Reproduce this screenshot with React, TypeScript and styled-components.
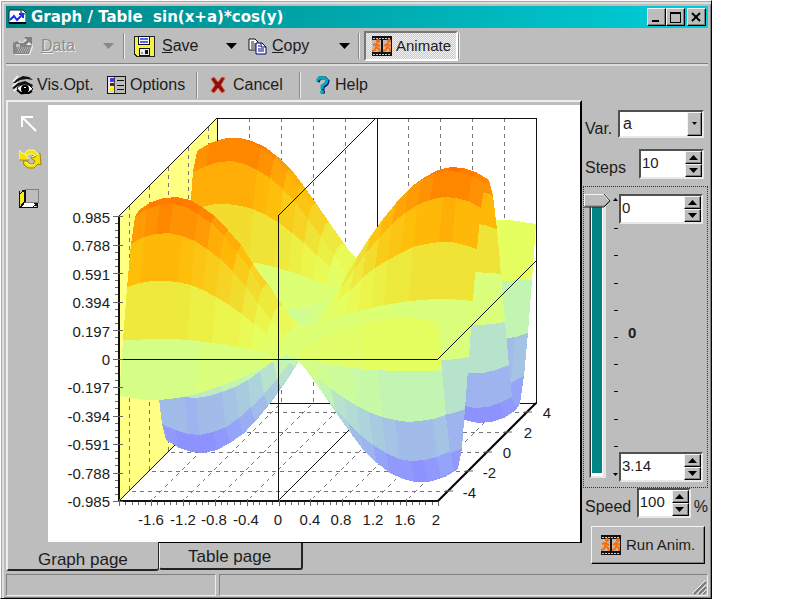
import React, { useState } from 'react';
import styled, { createGlobalStyle, css } from 'styled-components';

const FACE = '#bdbdbd';
const raised = css`
  border: 1px solid;
  border-color: #f4f4f4 #000 #000 #f4f4f4;
  box-shadow: inset -1px -1px 0 #808080;
`;
const sunken = css`
  border: 2px solid;
  border-color: #505050 #e8e8e8 #e8e8e8 #505050;
`;

const GlobalStyle = createGlobalStyle`
  * { box-sizing: border-box; }
  body {
    margin: 0;
    background: #fff;
    color: #1c1c1c;
    font: 16px/20px "Liberation Sans", Arial, sans-serif;
  }
  button, input, select { font: inherit; color: inherit; margin: 0; padding: 0; border-radius: 0; }
  svg { display: block; flex: none; }
`;

const Page = styled.div`
  min-height: 100vh;
  padding: 0 88px 1px 0;
  display: flex;
`;
const Window = styled.main`
  flex: 1;
  min-width: 0;
  display: flex;
  flex-direction: column;
  background: ${FACE};
  border: 1px solid;
  border-color: #fff #000 #000 #fff;
  box-shadow: inset 1px 1px 0 #a8a8a8, inset 3px 3px 0 #dedede, inset -1px -1px 0 #808080;
  padding: 5px 3px 2px 5px;
`;

const TitleBar = styled.header`
  height: 22px;
  display: flex;
  align-items: center;
  background: linear-gradient(90deg, #008484, #00ced8);
  color: #fff;
  padding: 0 2px 0 2px;
  gap: 5px;
`;
const Title = styled.h1`
  flex: 1;
  margin: 0;
  font: 700 15px/20px "DejaVu Sans", sans-serif;
  white-space: pre;
`;
const WindowButtons = styled.div`
  display: flex;
`;
const WindowButton = styled.button<{ $apart?: boolean }>`
  width: 19px;
  height: 18px;
  display: grid;
  place-items: center;
  background: ${FACE};
  margin-left: ${p => (p.$apart ? '2px' : '0')};
  ${raised}
`;

const Toolbar = styled.div<{ $second?: boolean }>`
  height: ${p => (p.$second ? '34px' : '38px')};
  display: flex;
  align-items: center;
  border-bottom: ${p => (p.$second ? '0' : '2px solid #dcdcdc')};
  box-shadow: ${p => (p.$second ? 'none' : 'inset 0 -1px 0 #808080')};
  padding: ${p => (p.$second ? '4px 0 0 6px' : '0 0 0 7px')};
`;
const ToolButton = styled.button<{ $w: number; $gap?: number; $disabled?: boolean; $down?: boolean }>`
  width: ${p => p.$w}px;
  height: 30px;
  display: flex;
  align-items: center;
  gap: ${p => p.$gap ?? 6}px;
  border: 0;
  background: none;
  text-align: left;
  white-space: nowrap;
  ${p => p.$disabled && css`
    color: #8c8c8c;
    text-shadow: 1px 1px 0 #eee;
  `}
  ${p => p.$down && css`
    padding-left: 6px;
    gap: 4px;
    font-size: 15px;
    border: 2px solid;
    border-color: #777 #fff #fff #777;
    background: repeating-conic-gradient(#f2f2f2 0 25%, #cacaca 0 50%) 0 0 / 2px 2px;
  `}
`;
const DropButton = styled.button<{ $w: number }>`
  width: ${p => p.$w}px;
  height: 30px;
  border: 0;
  background: none;
  display: grid;
  align-items: center;
`;
const Separator = styled.span<{ $gap: number }>`
  width: 2px;
  height: 26px;
  background: linear-gradient(90deg, #888 50%, #eee 50%);
  margin-right: ${p => p.$gap}px;
`;

const Body = styled.div`
  flex: 1;
  display: flex;
`;
const Book = styled.section`
  flex: 1;
  min-width: 0;
  display: flex;
  flex-direction: column;
`;
const BookPage = styled.div`
  flex: 1;
  display: flex;
  border: 2px solid;
  border-color: #eee #000 #000 #eee;
  border-bottom-width: 1px;
  padding-top: 3px;
`;
const IconStrip = styled.nav`
  width: 40px;
  display: flex;
  flex-direction: column;
  align-items: flex-start;
  padding: 9px 0 0 11px;
`;
const StripButton = styled.button<{ $h: number }>`
  height: ${p => p.$h}px;
  width: 26px;
  border: 0;
  background: none;
  display: flex;
  align-items: flex-start;
`;
const ChartArea = styled.div`
  flex: 1;
  min-width: 0;
  background: #fff;
`;
const ChartSvg = styled.svg`
  width: 100%;
  height: auto;
  font-size: 15px;
  fill: #1c1c1c;
`;
const Tabs = styled.div`
  display: flex;
  height: 31px;
  align-items: flex-start;
`;
const Tab = styled.button<{ $active?: boolean }>`
  width: ${p => (p.$active ? '153px' : '144px')};
  height: ${p => (p.$active ? '29px' : '27px')};
  margin-top: ${p => (p.$active ? '-1px' : '0')};
  padding: ${p => (p.$active ? '8px 0 0 30px' : '3px 0 0 28px')};
  text-align: left;
  font-size: 17px;
  background: ${FACE};
  border: 0 solid;
  border-color: #eee #222 #222 #eee;
  border-width: ${p => (p.$active ? '0 1px 2px 2px' : '0 2px 2px 1px')};
  border-radius: 0 0 3px 3px;
`;

const Side = styled.aside`
  width: 126px;
  display: flex;
  flex-direction: column;
  padding-left: 1px;
`;
const Field = styled.div<{ $top: number; $right?: number }>`
  display: flex;
  align-items: flex-start;
  justify-content: space-between;
  margin-top: ${p => p.$top}px;
  padding: 0 ${p => p.$right ?? 4}px 0 2px;
`;
const Label = styled.label`
  padding-top: 9px;
`;
const ComboWrap = styled.div`
  width: 86px;
  height: 28px;
  background: #fff;
  display: flex;
  ${sunken}
`;
const Combo = styled.select`
  appearance: none;
  flex: 1;
  border: 0;
  background: #fff;
  padding-left: 3px;
`;
const ComboArrow = styled.span`
  width: 15px;
  background: ${FACE};
  display: grid;
  place-items: center;
  pointer-events: none;
  ${raised}
`;
const SpinBox = styled.div<{ $w: number }>`
  width: ${p => p.$w}px;
  height: 30px;
  display: flex;
  background: #fff;
  ${sunken}
`;
const SpinInput = styled.input`
  flex: 1;
  min-width: 0;
  height: 22px;
  border: 0;
  background: none;
  font-size: 15px;
  padding-left: 1px;
`;
const SpinButtons = styled.div`
  width: 17px;
  display: grid;
  grid-template-rows: 1fr 1fr;
`;
const SpinButton = styled.button`
  display: grid;
  place-items: center;
  background: ${FACE};
  ${raised}
`;
const RangeGroup = styled.section`
  height: 302px;
  margin-top: 7px;
  padding: 7px 3px 5px 0;
  display: flex;
  border: 1px dotted #333;
`;
const THUMB = encodeURIComponent(
  `<svg xmlns="http://www.w3.org/2000/svg" width="27" height="14"><path d="M0 0h20l6 7-6 6H0z" fill="${FACE}"/><path d="M0 13V0h20l5 6" fill="none" stroke="#f4f4f4" stroke-width="2"/><path d="M1 12h19l5-5" fill="none" stroke="#808080"/><path d="M0 13h20l6-6-6-7" fill="none" stroke="#222"/></svg>`,
);
const VerticalSlider = styled.input`
  writing-mode: vertical-lr;
  appearance: none;
  width: 27px;
  height: 284px;
  background:
    linear-gradient(#008484, #008484) 8px 8px / 10px calc(100% - 13px) no-repeat,
    linear-gradient(#fff, #fff) 7px 8px / 12px calc(100% - 10px) no-repeat,
    linear-gradient(#333, #333) 6px 8px / 1px calc(100% - 9px) no-repeat,
    linear-gradient(#808080, #808080) 5px 8px / 1px calc(100% - 8px) no-repeat,
    linear-gradient(#e6e6e6, #e6e6e6) 6px 8px / 16px calc(100% - 8px) no-repeat;
  &::-webkit-slider-thumb {
    appearance: none;
    width: 27px;
    height: 14px;
    border: 0;
    background: url("data:image/svg+xml,${THUMB}") 0 0 no-repeat;
  }
`;
const Ticks = styled.div`
  width: 8px;
  display: flex;
  flex-direction: column;
  justify-content: space-between;
  align-items: center;
  padding: 4px 0 5px 1px;
`;
const Tick = styled.i`
  width: 4px;
  height: 1px;
  background: #111;
`;
const RangeValues = styled.div`
  flex: 1;
  display: flex;
  flex-direction: column;
  justify-content: space-between;
`;
const Current = styled.output`
  font-size: 15px;
  font-weight: 700;
  padding: 0 0 10px 9px;
`;
const SpeedControls = styled.div`
  display: flex;
  align-items: flex-start;
  gap: 3px;
`;
const Unit = styled.span`
  padding-top: 9px;
`;
const RunButton = styled.button`
  height: 38px;
  margin: 8px 3px 0 8px;
  display: flex;
  align-items: center;
  gap: 5px;
  padding-left: 9px;
  font-size: 15px;
  white-space: nowrap;
  background: ${FACE};
  ${raised}
`;
const StatusBar = styled.footer`
  display: flex;
  gap: 3px;
  height: 22px;
`;
const StatusPanel = styled.div<{ $w?: number }>`
  flex: ${p => (p.$w ? `0 0 ${p.$w}px` : '1')};
  border: 1px solid;
  border-color: #808080 #eee #eee #808080;
  display: flex;
  justify-content: flex-end;
  align-items: flex-end;
`;

const Arrow = ({ up, w = 7, fill = '#000' }: { up?: boolean; w?: number; fill?: string }) => {
  const h = Math.ceil(w / 2);
  return (
    <svg width={w + 1} height={h + 1}>
      <path d={up ? `M0 ${h}h${w}L${w / 2} 0z` : `M0 0h${w}L${w / 2} ${h}z`} fill={fill} />
    </svg>
  );
};

const AppIcon = () => (
  <svg width="18" height="16" viewBox="0 0 18 16">
    <path d="M2 1h13l3 3v10H1V3z" fill="#fff" stroke="#223" />
    <path d="M13 1v4h4" fill="#ccc" stroke="#223" />
    <path d="M2 11l4-4 3 4 6-6M11 5h4v4" fill="none" stroke="#1830f0" strokeWidth="2" />
    <path d="M1 14h17" stroke="#001" strokeWidth="2" />
  </svg>
);
const DataIcon = () => (
  <svg width="21" height="20" viewBox="0 0 21 20">
    <path d="M2 19V7l4-2 3 2 3-3 1-2 6-1v6l1 4-3 8z" fill="#eee" />
    <path d="M0 17V7l4-2 3 2h4v2h8l-3 9H1z" fill="#858585" />
    <path d="M3 8h4v3H3z" fill="#bdbdbd" />
    <path d="M4 12h13M5 14h11M4 16h11" stroke="#d0d0d0" strokeDasharray="1 1" />
    <path d="M9 8l5-4-3-3h8v8l-3-3-4 4z" fill="#808080" />
  </svg>
);
const SaveIcon = () => (
  <svg width="21" height="21" viewBox="0 0 21 21" shapeRendering="crispEdges">
    <path d="M0 0h21v21H2l-2-2z" fill="#222" />
    <path d="M1 1h19v19H3l-2-2z" fill="#f6f04a" />
    <path d="M4 0h12v9H4z" fill="#111" />
    <path d="M5 1h10v7H5z" fill="#fff" />
    <path d="M6 2h8v2H6zM6 5h8v2H6z" fill="#5468f4" />
    <path d="M5 12h11v8H5z" fill="#111" />
    <path d="M6 13h9v6H6z" fill="#eee" />
    <path d="M11 14h3v4h-3z" fill="#111" />
    <path d="M7 16h2v2H7z" fill="#999" />
  </svg>
);
const CopyIcon = () => (
  <svg width="19" height="17" viewBox="0 0 19 17">
    <path d="M1 1h6l3 3v8H1z" fill="#fff" stroke="#111" />
    <path d="M3 4h3M3 6h5M3 8h5M3 10h5" stroke="#222" />
    <path d="M8 5h6l4 4v7H8z" fill="#fff" stroke="#000084" />
    <path d="M13 5v4h5M10 8h2M10 11h6M10 13h6" fill="none" stroke="#000084" />
  </svg>
);
const FilmIcon = () => (
  <svg width="20" height="20" viewBox="0 0 20 20">
    <path d="M0 0h20v20H0z" fill="#111" shapeRendering="crispEdges" />
    <path d="M1 2h18M1 18h18" stroke="#ccc" strokeWidth="1" strokeDasharray="2 1" shapeRendering="crispEdges" />
    <path d="M0 4h9v12H0zM11 4h8v12h-8z" fill="#bdbdbd" shapeRendering="crispEdges" />
    <g fill="none" stroke="#ff6b00" strokeWidth="2">
      <path d="M5 7l-1 4M1 9l3-1 4 2M4 11l3 2 1 3M4 11l-1 3-3 1" />
      <path d="M16 7l-1 4M12 10l3-2 4 2M15 11l3 2v3M15 11l-1 3-3 1" />
    </g>
    <circle cx="6" cy="5" r="2" fill="#ff6b00" />
    <circle cx="17" cy="5" r="2" fill="#ff6b00" />
  </svg>
);
const EyeIcon = () => (
  <svg width="22" height="20" viewBox="0 0 22 20">
    <path d="M1 7L6 1M0 12l6-5M2 16l5-5" fill="none" stroke="#eee" strokeWidth="2" />
    <path d="M1 8l4-4 6-3 6 1 4 3-6-1-7 1-5 3z" fill="#111" />
    <path d="M0 13l6-5 7-2 8 4-1 2-7-3-7 2-4 3z" fill="#111" />
    <path d="M5 13l4-3h8l4 4-5 4-7 1z" fill="#fff" stroke="#111" />
    <circle cx="13" cy="14" r="4" fill="#000" />
    <path d="M5 15l4 3h8l3-2" fill="none" stroke="#000" strokeWidth="2" />
    <path d="M12 12h2v1h-2z" fill="#fff" />
  </svg>
);
const OptionsIcon = () => (
  <svg width="19" height="18" viewBox="0 0 19 18" shapeRendering="crispEdges">
    <path d="M0 0h19v18H0z" fill="#111" />
    <path d="M1 1h17v16H1z" fill="#e8e8e8" />
    <path d="M8 1h10v16H8z" fill="#bdbdbd" />
    <path d="M7 1h1v16H7z" fill="#444" />
    <path d="M3 2h4v4H3z" fill="#3840ff" />
    <path d="M3 7h4v3H3z" fill="#8b1010" />
    <path d="M3 12h4v4H3z" fill="#ffee00" />
    <path d="M10 4h7v1h-7zM10 9h7v1h-7zM10 13h7v1h-7z" fill="#111" />
  </svg>
);
const CancelIcon = () => (
  <svg width="17" height="18" viewBox="0 0 17 18">
    <path
      d="M1 3l3-2 4 5 4-5 3 1-4 7 4 6-3 2-4-5-4 5-3-2 4-6z"
      fill="#8c1010"
      stroke="#e0603a"
      strokeWidth="1"
    />
  </svg>
);
const HelpIcon = () => (
  <svg width="15" height="20" viewBox="0 0 15 20">
    <path d="M3 7l2-4h5l3 3-1 3-4 3v3" fill="none" stroke="#000084" strokeWidth="3" />
    <path d="M2 6l2-3h5l3 2-1 3-4 3v3" fill="none" stroke="#00adb5" strokeWidth="3" />
    <circle cx="8" cy="17" r="2" fill="#000084" />
    <circle cx="7" cy="17" r="2" fill="#00adb5" />
  </svg>
);
const PointerIcon = () => (
  <svg width="19" height="19" viewBox="0 0 19 19">
    <path d="M3 13V3h11M4 4l13 13" fill="none" stroke="#fff" strokeWidth="2" />
  </svg>
);
const RotateIcon = () => (
  <svg width="23" height="21" viewBox="0 0 23 21">
    <path d="M5 6l4-4h6l4 4-2 3-3-3h-4l-2 2z" fill="#f4e300" stroke="#fff6a0" />
    <path d="M0 2l3 3 3 1 4 5-10 1z" fill="#f4e300" stroke="#fff6a0" />
    <path d="M0 12h10M18 7l-3 2-2-2" fill="none" stroke="#9c8a00" />
    <path d="M4 13h4l3 3h3l2-3-4-3 4-1 5-4 1 12-3-1-4 4H9l-4-3z" fill="#f4e300" stroke="#9c8a00" />
    <path d="M13 9l7-3M6 14l4 3h4" fill="none" stroke="#fff6a0" />
  </svg>
);
const BoxIcon = () => (
  <svg width="22" height="21" viewBox="0 0 22 21" shapeRendering="crispEdges">
    <path d="M1 5l5-4v12l-5 6z" fill="#f6ef20" />
    <path d="M1 19l5-6h14l-5 6z" fill="#fff" />
    <path d="M6 0h14v14H6z" fill="#808080" />
    <path d="M7 1h12v12H7z" fill="#bdbdbd" />
    <path d="M0 2h1v16h18v1H0z" fill="#111" />
    <path d="M5 1h1v12L2 18H1l4-5zM1 5l4-4M14 18l5-4" fill="#111" stroke="#111" />
    <path d="M2 1h4v4zM14 14h5v4z" fill="#111" />
  </svg>
);
const GripIcon = () => (
  <svg width="15" height="15" viewBox="0 0 15 15">
    <path d="M2 14L14 2M7 14l7-7M11 14l3-3" stroke="#777" strokeWidth="2" />
    <path d="M0 14L14 0M5 14l9-9M10 14l4-4" stroke="#eee" />
  </svg>
);

/* Chart geometry: a front rectangle pushed back along a diagonal. */
const LEFT = 71;
const RIGHT = 390;
const TOP = 111;
const BOTTOM = 396;
const ZERO = 254;
const MID = 230;
const DEPTH = 98;
const STEPS = 25;

const project = (x: number, y: number, z: number) => {
  const d = (y + 5) * (DEPTH / 10);
  const px = Math.round(LEFT + (x + 2) * ((RIGHT - LEFT) / 4) + d);
  const py = Math.round(ZERO - z * 144 - d);
  return `${px},${py}`;
};

const PALETTE: [number, number[]][] = [
  [-1, [138, 138, 255]],
  [-0.88, [143, 148, 255]],
  [-0.78, [149, 168, 246]],
  [-0.62, [164, 192, 230]],
  [-0.48, [174, 214, 218]],
  [-0.36, [188, 232, 196]],
  [-0.28, [196, 248, 172]],
  [-0.08, [214, 255, 130]],
  [0.1, [230, 255, 96]],
  [0.22, [236, 243, 72]],
  [0.34, [238, 230, 56]],
  [0.48, [248, 206, 30]],
  [0.62, [255, 188, 8]],
  [0.76, [255, 163, 8]],
  [0.88, [255, 140, 0]],
  [1, [255, 112, 0]],
];
const colorFor = (value: number) => {
  const v = Math.round(value * 20) / 20;
  let i = 0;
  while (i < PALETTE.length - 2 && PALETTE[i + 1][0] < v) i += 1;
  const [a, ca] = PALETTE[i];
  const [b, cb] = PALETTE[i + 1];
  const t = Math.max(0, Math.min(1, (v - a) / (b - a)));
  return `rgb(${ca.map((c, k) => Math.round(c + (cb[k] - c) * t)).join(',')})`;
};

const buildSurface = (a: number) => {
  const f = (x: number, y: number) => Math.sin(x + a) * Math.cos(y);
  const quads: { points: string; fill: string }[] = [];
  for (let j = STEPS - 1; j >= 0; j -= 1) {
    for (let i = 0; i < STEPS; i += 1) {
      const x0 = -2 + (i * 4) / STEPS;
      const x1 = x0 + 4 / STEPS;
      const y0 = -5 + (j * 10) / STEPS;
      const y1 = y0 + 10 / STEPS;
      const corners: [number, number][] = [[x0, y0], [x1, y0], [x1, y1], [x0, y1]];
      const zs = corners.map(([x, y]) => f(x, y));
      quads.push({
        points: corners.map(([x, y], k) => project(x, y, zs[k])).join(' '),
        fill: colorFor((zs[0] + zs[1] + zs[2] + zs[3]) / 4),
      });
    }
  }
  return quads;
};

const Z_LABELS = ['0.985', '0.788', '0.591', '0.394', '0.197', '0', '-0.197', '-0.394', '-0.591', '-0.788', '-0.985'];
const X_LABELS = ['-1.6', '-1.2', '-0.8', '-0.4', '0', '0.4', '0.8', '1.2', '1.6', '2'];
const Y_LABELS = ['-4', '-2', '0', '2', '4'];
const Y_LABEL_ENDS = [428, 448, 463, 484, 503];
const range = (n: number) => Array.from({ length: n }, (_, i) => i);

const Chart = ({ a }: { a: number }) => (
  <ChartSvg viewBox="0 0 532 437" role="img" aria-label="Surface graph of sin(x+a)*cos(y)">
    <g shapeRendering="crispEdges" fill="none" stroke="#111">
      <path d={`M${LEFT} ${TOP}l${DEPTH} -${DEPTH}V${BOTTOM - DEPTH}L${LEFT} ${BOTTOM}z`} fill="#ffff84" stroke="none" />
      <g stroke="#777" strokeDasharray="4 4">
        {range(5).map(i => {
          const d = 10 + i * 20 - (i > 1 ? 1 : 0);
          return <path key={i} d={`M${LEFT + d} ${TOP - d}V${BOTTOM - d}H${RIGHT + d}`} />;
        })}
        {range(9).map(i => {
          const x = LEFT + Math.round(((i + 1) * 319) / 10);
          return i === 4 ? null : <path key={i} d={`M${x + DEPTH} ${TOP - DEPTH}V${BOTTOM - DEPTH}L${x} ${BOTTOM}`} />;
        })}
      </g>
      <path d={`M${LEFT + DEPTH} ${BOTTOM - DEPTH}V${TOP - DEPTH}H${RIGHT + DEPTH}V${BOTTOM - DEPTH}H${LEFT + DEPTH}`} />
      <path d={`M${MID + DEPTH + 1} ${TOP - DEPTH}V${BOTTOM - DEPTH}`} />
    </g>
    <g fill="none" stroke="#111">
      <path d={`M${LEFT} ${TOP}l${DEPTH} -${DEPTH}M${LEFT} ${BOTTOM}l${DEPTH} -${DEPTH}M${MID} ${BOTTOM}l${DEPTH} -${DEPTH}`} />
    </g>
    <g shapeRendering="crispEdges">
      {buildSurface(a).map((q, i) => <polygon key={i} points={q.points} fill={q.fill} />)}
    </g>
    <path d={`M${MID} ${TOP}l${DEPTH} -${DEPTH}M${RIGHT} ${ZERO}l${DEPTH} -${DEPTH}`} stroke="#111" />
    <g shapeRendering="crispEdges" fill="none" stroke="#111">
      <path d={`M${MID} ${TOP}V${BOTTOM}M${LEFT} ${ZERO}H${RIGHT}M${RIGHT + DEPTH} ${TOP - DEPTH}V${BOTTOM - DEPTH}`} />
      <path d={`M${LEFT} ${TOP}V${BOTTOM}H${RIGHT}`} strokeWidth="2" />
      {range(41).map(i => {
        const y = TOP + Math.round((i * 285) / 40);
        return <path key={i} d={i % 4 ? `M${LEFT - 4} ${y}h3` : `M${LEFT - 6} ${y}h10`} stroke="#666" />;
      })}
      {range(51).map(i => {
        const x = LEFT + Math.round((i * 319) / 50);
        return <path key={i} d={i % 5 ? `M${x} ${BOTTOM + 1}v3` : `M${x} ${BOTTOM - 2}v7`} stroke="#666" />;
      })}
    </g>
    <path d={`M${RIGHT} ${BOTTOM}l${DEPTH} -${DEPTH}`} stroke="#000" strokeWidth="2" />
    {range(5).map(i => {
      const d = 10 + i * 20 - (i > 1 ? 1 : 0);
      return <path key={i} d={`M${RIGHT + d - 3} ${BOTTOM - d}h8`} stroke="#666" />;
    })}
    {Z_LABELS.map((t, i) => (
      <text key={t} x={LEFT - 9} y={TOP + 7 + Math.round(i * 28.4)} textAnchor="end">{t}</text>
    ))}
    {X_LABELS.map((t, i) => (
      <text key={t} x={LEFT + 32 + Math.round(i * 31.7)} y={BOTTOM + 24} textAnchor="middle">{t}</text>
    ))}
    {Y_LABELS.map((t, i) => (
      <text key={t} x={Y_LABEL_ENDS[i]} y={BOTTOM - 3 - i * 20} textAnchor="end">{t}</text>
    ))}
  </ChartSvg>
);

const Spin = ({ w, value, label, id }: { w: number; value: string; label?: string; id?: string }) => (
  <SpinBox $w={w}>
    <SpinInput id={id} aria-label={label} defaultValue={value} />
    <SpinButtons>
      <SpinButton aria-label="Increase"><Arrow up w={9} /></SpinButton>
      <SpinButton aria-label="Decrease"><Arrow w={9} /></SpinButton>
    </SpinButtons>
  </SpinBox>
);

export default function App() {
  const [a, setA] = useState(0);
  return (
    <>
      <GlobalStyle />
      <Page>
        <Window>
          <TitleBar>
            <AppIcon />
            <Title>{'Graph / Table  sin(x+a)*cos(y)'}</Title>
            <WindowButtons>
              <WindowButton aria-label="Minimize">
                <svg width="11" height="11"><path d="M1 8h7v2H1z" /></svg>
              </WindowButton>
              <WindowButton aria-label="Maximize">
                <svg width="11" height="11" shapeRendering="crispEdges"><path d="M0 0h11v11H0zM1 2v8h9V2z" fillRule="evenodd" /></svg>
              </WindowButton>
              <WindowButton aria-label="Close" $apart>
                <svg width="11" height="11"><path d="M1 1l8 8M9 1L1 9" stroke="#000" strokeWidth="2" /></svg>
              </WindowButton>
            </WindowButtons>
          </TitleBar>

          <Toolbar>
            <ToolButton $w={90} $gap={7} $disabled disabled><DataIcon /><span><u>D</u>ata</span></ToolButton>
            <DropButton $w={20} aria-label="Data menu" disabled><Arrow w={11} fill="#888" /></DropButton>
            <Separator $gap={9} />
            <ToolButton $w={92} $gap={7}><SaveIcon /><span><u>S</u>ave</span></ToolButton>
            <DropButton $w={22} aria-label="Save menu"><Arrow w={11} /></DropButton>
            <ToolButton $w={91} $gap={5}><CopyIcon /><span><u>C</u>opy</span></ToolButton>
            <DropButton $w={19} aria-label="Copy menu"><Arrow w={11} /></DropButton>
            <Separator $gap={4} />
            <ToolButton $w={94} $down aria-pressed="true"><FilmIcon /><span>Animate</span></ToolButton>
            <Separator $gap={0} />
          </Toolbar>
          <Toolbar $second>
            <ToolButton $w={95} $gap={3}><EyeIcon /><span>Vis.Opt.</span></ToolButton>
            <ToolButton $w={89} $gap={4}><OptionsIcon /><span>Options</span></ToolButton>
            <Separator $gap={12} />
            <ToolButton $w={89} $gap={6}><CancelIcon /><span>Cancel</span></ToolButton>
            <Separator $gap={14} />
            <ToolButton $w={70} $gap={5}><HelpIcon /><span>Help</span></ToolButton>
          </Toolbar>

          <Body>
            <Book>
              <BookPage>
                <IconStrip>
                  <StripButton $h={34} aria-label="Pointer"><PointerIcon /></StripButton>
                  <StripButton $h={41} aria-label="Rotate"><RotateIcon /></StripButton>
                  <StripButton $h={30} aria-label="Axes box"><BoxIcon /></StripButton>
                </IconStrip>
                <ChartArea><Chart a={a} /></ChartArea>
              </BookPage>
              <Tabs role="tablist">
                <Tab role="tab" aria-selected="true" $active>Graph page</Tab>
                <Tab role="tab" aria-selected="false">Table page</Tab>
              </Tabs>
            </Book>

            <Side>
              <Field $top={10}>
                <Label htmlFor="variable">Var.</Label>
                <ComboWrap>
                  <Combo id="variable"><option>a</option></Combo>
                  <ComboArrow><Arrow w={5} /></ComboArrow>
                </ComboWrap>
              </Field>
              <Field $top={10}>
                <Label htmlFor="steps">Steps</Label>
                <Spin id="steps" w={65} value="10" />
              </Field>
              <RangeGroup>
                <VerticalSlider
                  type="range"
                  aria-label="Value of a"
                  min={0}
                  max={3.14}
                  step={0.01}
                  value={a}
                  onChange={e => setA(Number(e.target.value))}
                />
                <Ticks>
                  <Arrow up w={5} />
                  {range(9).map(i => <Tick key={i} />)}
                  <Arrow w={5} />
                </Ticks>
                <RangeValues>
                  <Spin w={84} value="0" label="From" />
                  <Current>{a}</Current>
                  <Spin w={84} value="3.14" label="To" />
                </RangeValues>
              </RangeGroup>
              <Field $top={0} $right={0}>
                <Label htmlFor="speed">Speed</Label>
                <SpeedControls>
                  <Spin id="speed" w={54} value="100" />
                  <Unit>%</Unit>
                </SpeedControls>
              </Field>
              <RunButton><FilmIcon /><span>Run Anim.</span></RunButton>
            </Side>
          </Body>

          <StatusBar>
            <StatusPanel $w={210} />
            <StatusPanel><GripIcon /></StatusPanel>
          </StatusBar>
        </Window>
      </Page>
    </>
  );
}
